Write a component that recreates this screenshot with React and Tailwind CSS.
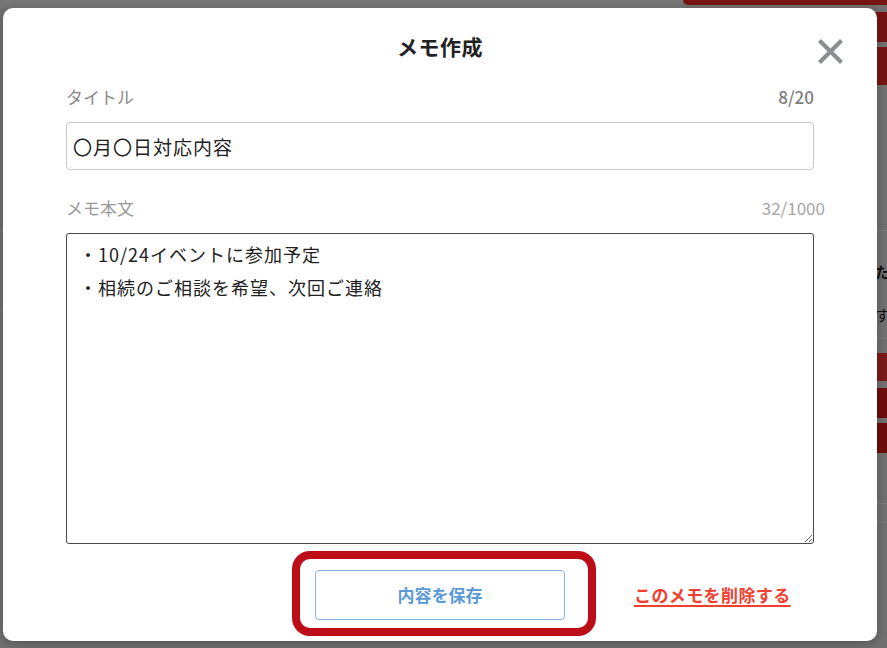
import React from 'react'

const jp = { fontFamily: '"Noto Sans CJK JP", "Noto Sans", sans-serif' }

// dimmed page that sits behind the dialog
const BackPage = () => (
  <div className="absolute inset-0 flex bg-[#6f6f6f]">
    <div className="flex-1 flex flex-col">
      <div className="h-[8px] bg-[#767676]" />
      <div className="mt-[222px] border-t border-[#7c7c7c]" />
      <div className="mt-[80px] border-t border-[#7c7c7c]" />
    </div>
    <div className="w-[204px] flex flex-col">
      <div className="h-[5px] bg-[#761414] rounded-bl-[6px]" />
      <div className="mt-[7px] h-[30px] bg-[#761414]" />
      <div className="mt-[5px] h-[38px] bg-[#761414]" />
      <div className="mt-[145px] border-t border-[#7a7a7a]" />
      <div className="mt-[30px] pl-[192px] text-[15px] font-bold text-[#111]" style={jp}>た</div>
      <div className="mt-[20px] pl-[192px] text-[15px] text-[#111]" style={jp}>す</div>
      <div className="mt-[12px] border-t border-[#7a7a7a]" />
      <div className="mt-[14px] h-[28px] bg-[#7a1a1a]" />
      <div className="mt-[7px] h-[30px] bg-[#6e0c0c]" />
      <div className="mt-[5px] h-[30px] bg-[#6e0c0c]" />
      <div className="mt-[50px] border-t border-[#7a7a7a]" />
      <div className="mt-[18px] border-t border-[#7a7a7a]" />
    </div>
  </div>
)

export default function App() {
  return (
    <div className="relative w-[887px] h-[648px] overflow-hidden" style={jp}>
      <BackPage />

      {/* dialog */}
      <div className="absolute left-[3px] top-[8px] w-[874px] h-[633px] bg-white rounded-[10px] shadow-[0_2px_8px_rgba(0,0,0,0.25)]">
        <h2 className="pt-[24px] text-center text-[21px] leading-[28px] tracking-[0.5px] font-bold text-[#222]">メモ作成</h2>

        <button className="absolute left-[815px] top-[31px] w-[25px] h-[25px] text-[#8b8e90]">
          <svg viewBox="0 0 25 25" className="w-full h-full" fill="none" stroke="currentColor" strokeWidth="4.2" strokeLinecap="square">
            <path d="M3 3 L22 22 M22 3 L3 22" />
          </svg>
        </button>

        <div className="px-[63px] pt-[25px] flex flex-col">
          <div className="flex justify-between text-[17px] leading-[24px]">
            <span className="text-[#8a8a8a]">タイトル</span>
            <span className="text-[#7d7d7d] font-medium">8/20</span>
          </div>
          <input
            readOnly
            value="〇月〇日対応内容"
            className="mt-[13px] h-[48px] w-full px-[6px] border border-[#c9c9c9] rounded-[4px] text-[19px] tracking-[1px] text-[#222] outline-none"
            style={jp}
          />

          <div className="mt-[26px] flex justify-between text-[17px] leading-[24px] -mr-[11px]">
            <span className="text-[#9a9a9a]">メモ本文</span>
            <span className="text-[#a6a6a6]">32/1000</span>
          </div>
          <textarea
            readOnly
            value={'・10/24イベントに参加予定\n・相続のご相談を希望、次回ご連絡'}
            className="mt-[13px] h-[311px] w-full px-[12px] pt-[4px] border border-[#4a4a4a] rounded-[3px] text-[18px] leading-[33px] tracking-[1px] text-[#222] outline-none"
            style={jp}
          />
        </div>

        {/* actions */}
        <div className="mt-[26px] grid grid-cols-[1fr_250px_1fr] items-center">
          <div />
          <div className="relative">
            <div className="absolute -left-[23px] -top-[19px] w-[304px] h-[85px] border-[8px] border-[#bd0d19] rounded-[18px]" />
            <button className="relative w-[250px] h-[50px] border border-[#7fb2e6] rounded-[4px] bg-white text-[17px] font-bold text-[#5a9ad8]" style={jp}>
              内容を保存
            </button>
          </div>
          <div className="pl-[69px]">
            <a className="text-[17px] font-bold tracking-[0.4px] text-[#f2402f] underline underline-offset-[3px] decoration-[2px]">このメモを削除する</a>
          </div>
        </div>
      </div>
    </div>
  )
}
